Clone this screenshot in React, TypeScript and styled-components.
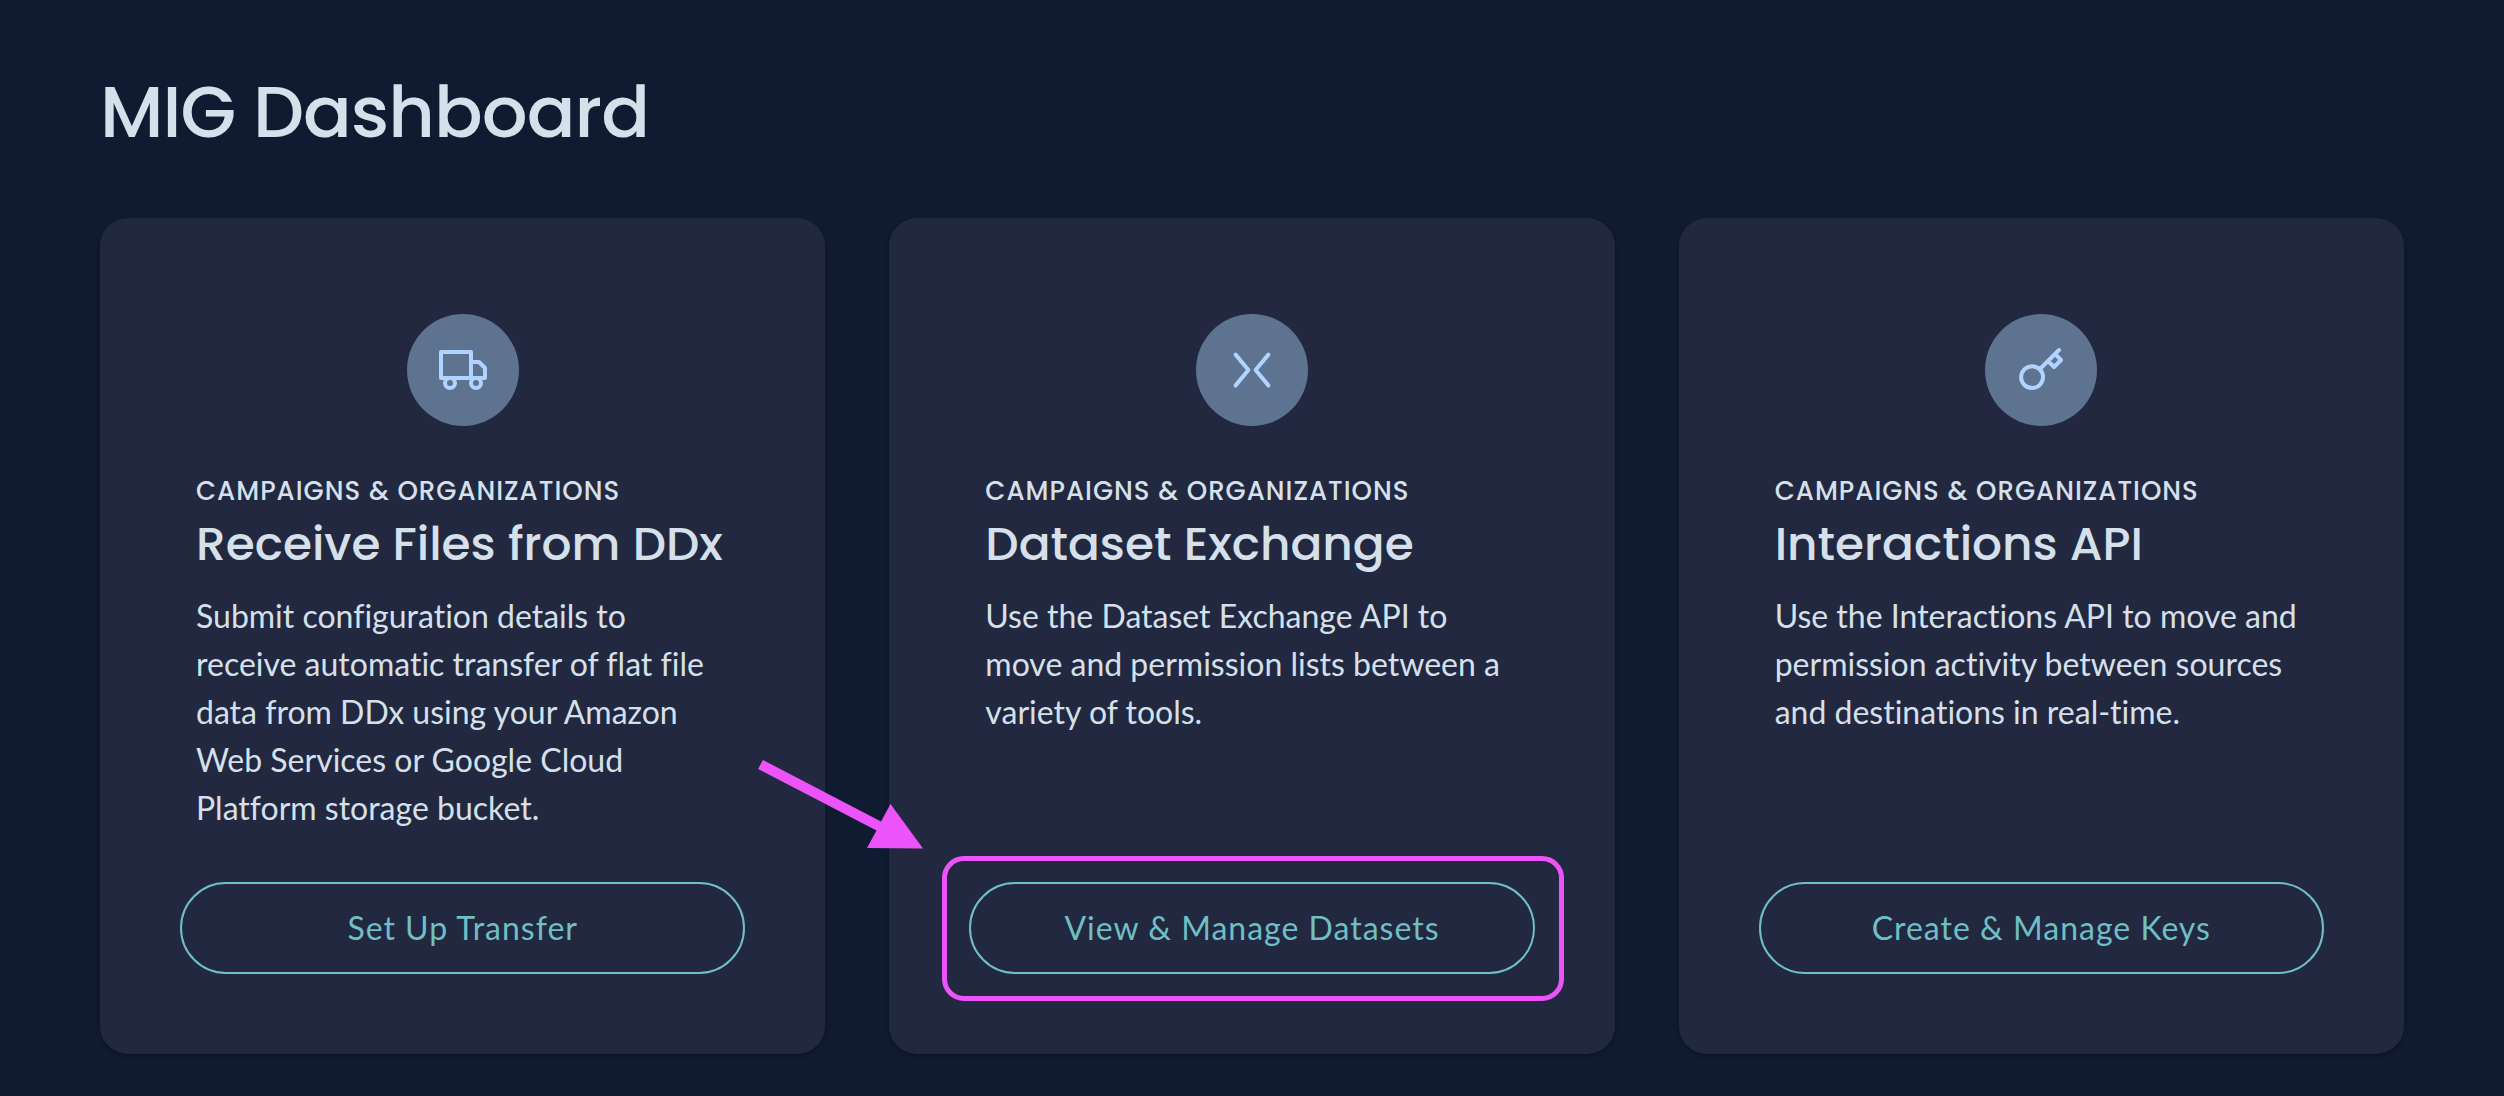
import React from "react";
import styled, { createGlobalStyle } from "styled-components";
import { FiKey, FiTruck } from "react-icons/fi";

const GlobalStyle = createGlobalStyle`
  *, *::before, *::after {
    box-sizing: border-box;
  }
  body {
    margin: 0;
    background: #101b31;
    color: #d6e0eb;
    font-family: Lato, "Liberation Sans", sans-serif;
    font-variant-ligatures: none;
  }
`;

const headingFont = `Poppins, Inter, "Liberation Sans", sans-serif`;

const Page = styled.main`
  min-height: 100vh;
  padding: 64px 100px 43px;
  display: flex;
  flex-direction: column;
  gap: 58px;
`;

const PageTitle = styled.h1`
  margin: 0;
  font: 500 72px/96px ${headingFont};
  letter-spacing: -1px;
`;

const CardGrid = styled.div`
  display: grid;
  grid-template-columns: repeat(3, minmax(0, 1fr));
  gap: 64px;
`;

const Card = styled.section`
  display: flex;
  flex-direction: column;
  padding: 96px 80px 80px;
  border-radius: 28px;
  background: #212840;
  box-shadow: 0 2px 4px rgba(0, 0, 0, 0.25);
`;

const IconCircle = styled.div`
  display: grid;
  place-items: center;
  align-self: center;
  width: 112px;
  height: 112px;
  border-radius: 50%;
  background: #5d738f;
  color: #b0d4ff;
`;

const CardText = styled.div`
  flex: 1;
  padding: 48px 16px 50px;
`;

const Eyebrow = styled.p`
  margin: 0;
  font: 500 26px/34px ${headingFont};
  letter-spacing: 1px;
  text-transform: uppercase;
  white-space: nowrap;
`;

const CardTitle = styled.h2`
  margin: 4px 0 16px;
  font: 500 47px/64px ${headingFont};
  white-space: nowrap;
`;

const Description = styled.p`
  margin: 0;
  font-size: 32px;
  line-height: 48px;
`;

const Action = styled.div`
  position: relative;
  display: flex;
`;

const PillButton = styled.button`
  flex: 1;
  height: 92px;
  padding: 0 32px;
  border: 2px solid #6fbfc4;
  border-radius: 46px;
  background: transparent;
  color: #6fbfc4;
  font: 400 32px/48px Lato, "Liberation Sans", sans-serif;
  letter-spacing: 1px;
  cursor: pointer;
`;

const Highlight = styled.div`
  position: absolute;
  inset: -26px -29px -27px -27px;
  border: 5px solid #ec54f9;
  border-radius: 22px;
  pointer-events: none;
`;

const Arrow = styled.svg`
  position: absolute;
  top: -122px;
  left: -211px;
  pointer-events: none;
`;

const ExchangeIcon = () => (
  <svg
    width="48"
    height="48"
    viewBox="0 0 24 24"
    fill="none"
    stroke="currentColor"
    strokeWidth="2"
    strokeLinecap="round"
    strokeLinejoin="round"
    aria-hidden="true"
  >
    <path d="M3.8 4.3L10.2 12L3.8 19.7M20.2 4.3L13.8 12L20.2 19.7" />
  </svg>
);

interface CardData {
  icon: React.ReactNode;
  title: string;
  description: string;
  action: string;
  highlighted?: boolean;
}

const cards: CardData[] = [
  {
    icon: <FiTruck size={48} aria-hidden="true" />,
    title: "Receive Files from DDx",
    description:
      "Submit configuration details to receive automatic transfer of flat file data from DDx using your Amazon Web Services or Google Cloud Platform storage bucket.",
    action: "Set Up Transfer",
  },
  {
    icon: <ExchangeIcon />,
    title: "Dataset Exchange",
    description:
      "Use the Dataset Exchange API to move and permission lists between a variety of tools.",
    action: "View & Manage Datasets",
    highlighted: true,
  },
  {
    icon: <FiKey size={48} aria-hidden="true" />,
    title: "Interactions API",
    description:
      "Use the Interactions API to move and permission activity between sources and destinations in real-time.",
    action: "Create & Manage Keys",
  },
];

export default function App() {
  return (
    <>
      <GlobalStyle />
      <Page>
        <PageTitle>MIG Dashboard</PageTitle>
        <CardGrid>
          {cards.map((card) => (
            <Card key={card.title}>
              <IconCircle>{card.icon}</IconCircle>
              <CardText>
                <Eyebrow>Campaigns &amp; Organizations</Eyebrow>
                <CardTitle>{card.title}</CardTitle>
                <Description>{card.description}</Description>
              </CardText>
              <Action>
                <PillButton type="button">{card.action}</PillButton>
                {card.highlighted && (
                  <>
                    <Highlight />
                    <Arrow width="166" height="90" viewBox="0 0 166 90" fill="#ec54f9" aria-hidden="true">
                      <path d="M5 0L123 61.5L132.5 44L165 88.5L109 88L118.5 70.5L0 9Z" />
                    </Arrow>
                  </>
                )}
              </Action>
            </Card>
          ))}
        </CardGrid>
      </Page>
    </>
  );
}
